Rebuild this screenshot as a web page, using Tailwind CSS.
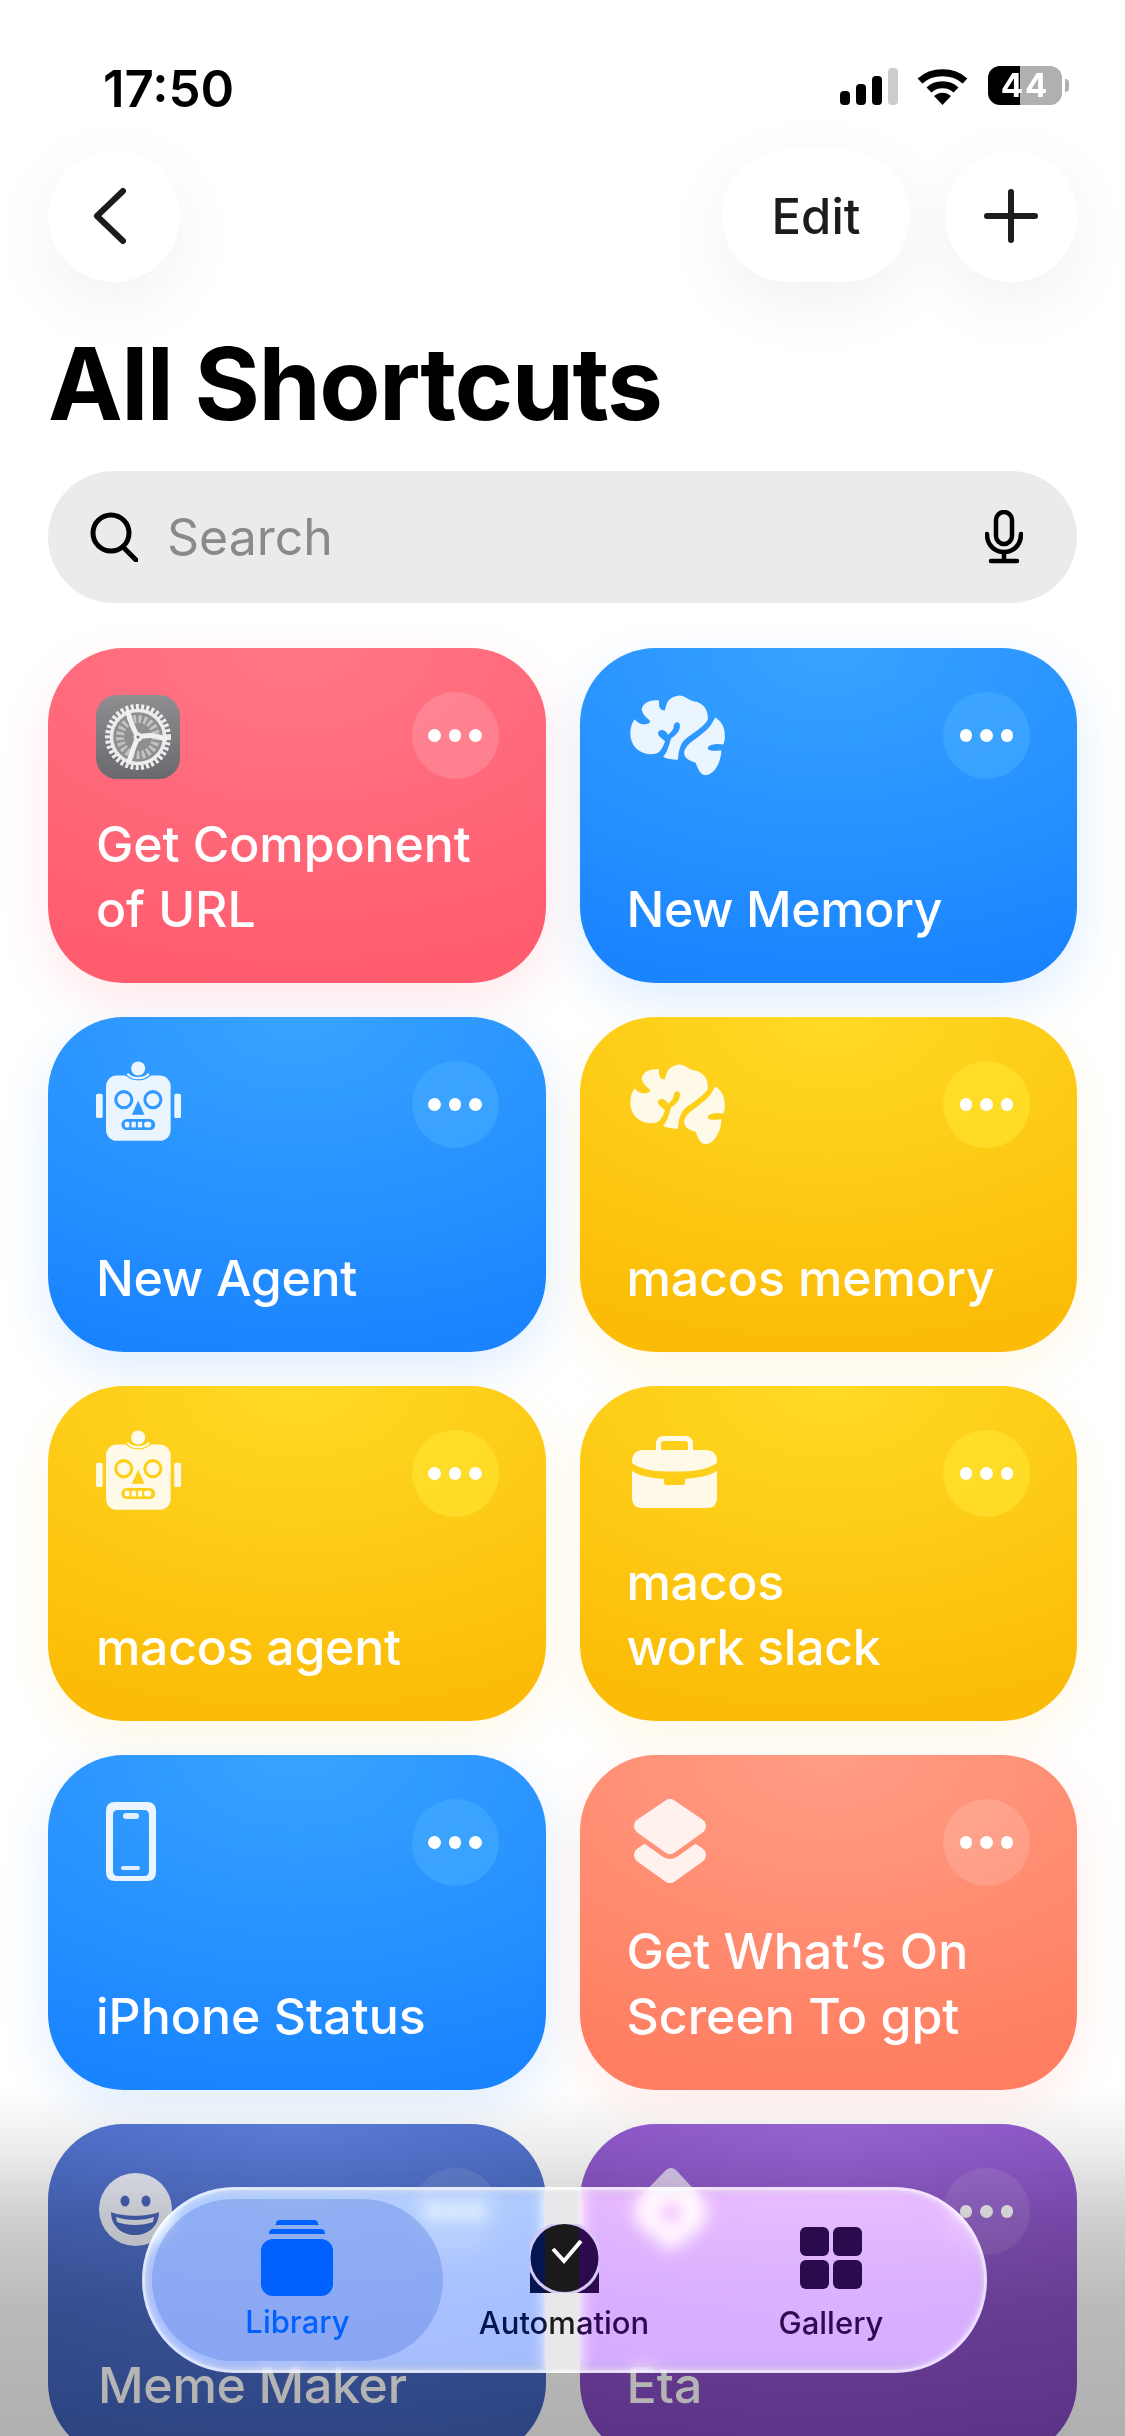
<!DOCTYPE html>
<html lang="en">
<head>
  <meta charset="UTF-8" />
  <meta name="viewport" content="width=device-width, initial-scale=1" />
  <title>All Shortcuts</title>
  <script src="https://cdn.jsdelivr.net/npm/@tailwindcss/browser@4"></script>
</head>
<body class="bg-white">

  <!-- shared icons -->
  <svg class="hidden">
    <symbol id="brain" viewBox="90 45 290 245">
      <path d="M125 88 C130 68 155 58 178 62 C176 75 178 92 195 92 C200 70 205 52 235 47 C255 45 268 62 285 65 C310 68 328 90 325 120 C315 140 280 160 255 180 C240 195 236 220 235 240 C220 242 200 238 190 232 C205 215 207 195 215 175 C228 168 245 150 240 133 C235 122 222 128 222 140 C222 150 212 158 205 165 C198 150 180 145 175 158 C172 170 190 178 196 185 C190 200 185 215 170 222 C140 230 100 215 92 175 C88 150 95 128 105 118 C110 130 135 140 150 128 C155 118 130 115 125 88 Z" />
      <path d="M347 113 C365 122 378 145 376 165 C378 175 376 185 372 195 C358 192 335 192 326 202 C322 212 335 214 345 214 C352 213 360 212 366 213 C366 240 350 285 318 288 C300 285 295 265 288 250 C270 245 250 235 254 215 C262 190 290 180 310 160 C330 145 340 130 347 113 Z" />
    </symbol>
    <symbol id="robot" viewBox="52 45 254 238">
      <rect x="82" y="88" width="193" height="195" rx="32" />
      <rect x="52" y="142" width="20" height="73" rx="5" />
      <rect x="286" y="142" width="20" height="73" rx="5" />
      <path d="M130 72 C145 112 212 112 226 72 L226 60 H130 Z" fill="currentColor" />
      <path d="M146 82 C158 100 198 100 210 82" fill="none" stroke="white" stroke-opacity="0.9" stroke-width="7" />
      <circle cx="178" cy="67" r="21" />
      <circle cx="135" cy="160" r="24" fill="none" stroke="currentColor" stroke-width="9" />
      <circle cx="222" cy="160" r="24" fill="none" stroke="currentColor" stroke-width="9" />
      <path d="M178 163 L197 205 H159 Z" fill="currentColor" />
      <rect x="128" y="218" width="101" height="33" rx="16" fill="currentColor" />
      <rect x="138" y="226" width="14" height="17" rx="4" fill="white" fill-opacity="0.9" />
      <rect x="158" y="226" width="13" height="17" fill="white" fill-opacity="0.9" />
      <rect x="177" y="226" width="13" height="17" fill="white" fill-opacity="0.9" />
      <rect x="196" y="226" width="21" height="17" rx="5" fill="white" fill-opacity="0.9" />
    </symbol>
  </svg>

  <div class="relative w-[1125px] h-[2436px] overflow-hidden bg-white font-[Inter,sans-serif] text-black">

    <!-- status bar -->
    <div class="flex justify-between h-[149px] pt-[62px] pl-[103px] pr-[56px]">
      <span class="text-[51px] leading-[54px] font-semibold">17:50</span>
      <div class="flex items-start pt-[6px]">
        <svg width="58" height="37" viewBox="0 0 58 37">
          <rect x="0" y="23" width="10" height="14" rx="4" />
          <rect x="16" y="16" width="10" height="21" rx="4" />
          <rect x="32" y="8" width="10" height="29" rx="4" />
          <rect x="48" y="0" width="10" height="37" rx="4" fill="#cccccc" />
        </svg>
        <svg class="ml-[19px]" width="51" height="37" viewBox="0 0 51 37" fill="none" stroke="black" stroke-width="7">
          <path d="M3 13 C15 2 36 2 48 13" />
          <path d="M12 22 C19 15 32 15 39 22" />
          <path d="M17 28 L25.5 37 L34 28 C29 23.5 22 23.5 17 28 Z" fill="black" stroke="none" />
        </svg>
        <div class="ml-[20px] flex items-center -mt-[2px]">
          <div class="relative w-[74px] h-[39px] rounded-[12px] overflow-hidden bg-[linear-gradient(90deg,#000_0,#000_32px,#b0b0b0_32px)] flex items-center justify-center">
            <span class="text-white text-[33px] leading-none font-bold tracking-[2px]">44</span>
          </div>
          <div class="ml-[3px] w-[4px] h-[13px] rounded-r-full bg-[#b0b0b0]"></div>
        </div>
      </div>
    </div>

    <!-- nav -->
    <div class="flex justify-between items-center px-[48px] h-[133px]">
      <div class="flex items-center justify-center w-[132px] h-[132px] rounded-full bg-white shadow-[0_20px_70px_rgba(0,0,0,0.06)]">
        <svg class="-ml-[8px]" width="34" height="58" viewBox="0 0 34 58" fill="none" stroke="#1c1c1e" stroke-width="6" stroke-linecap="round" stroke-linejoin="round"><path d="M30 4 L4 29 L30 54" /></svg>
      </div>
      <div class="flex gap-[35px]">
        <div class="flex items-center justify-center w-[188px] h-[132px] pt-[2px] rounded-full bg-white text-[#1c1c1e] text-[49px] font-medium shadow-[0_20px_70px_rgba(0,0,0,0.06)]">Edit</div>
        <div class="flex items-center justify-center w-[132px] h-[132px] rounded-full bg-white shadow-[0_20px_70px_rgba(0,0,0,0.06)]">
          <svg width="54" height="54" viewBox="0 0 54 54" stroke="#1c1c1e" stroke-width="6" stroke-linecap="round"><path d="M27 3 V51 M3 27 H51" /></svg>
        </div>
      </div>
    </div>

    <!-- title -->
    <h1 class="px-[48px] h-[189px] flex items-center pt-[14px] text-[100px] font-bold tracking-[-1.5px] leading-none">All Shortcuts</h1>

    <!-- search -->
    <div class="mx-[48px] h-[132px] rounded-[66px] bg-[#ebebeb] flex items-center pl-[42px] pr-[54px]">
      <svg width="48" height="50" viewBox="0 0 48 50" fill="none" stroke="black" stroke-width="5" stroke-linecap="round"><circle cx="21" cy="21" r="18" /><path d="M33 35 L46 48" /></svg>
      <span class="ml-[29px] text-[50px] text-[#8a8a8a]">Search</span>
      <svg class="ml-auto" width="38" height="54" viewBox="0 0 38 54" fill="none" stroke="black" stroke-width="4.5" stroke-linecap="round"><rect x="11" y="2" width="16" height="32" rx="8" /><path d="M2 24 C2 48 36 48 36 24" /><path d="M19 42 V51 M6 51 H32" /></svg>
    </div>

    <!-- cards -->
    <div class="grid grid-cols-2 gap-x-[34px] gap-y-[34px] auto-rows-[335px] px-[48px] mt-[45px]">

      <div class="flex flex-col justify-between rounded-[76px] pt-[44px] pb-[41px] pl-[48px] pr-[47px] text-white bg-[radial-gradient(110%_100%_at_50%_0%,#ff7687_0%,#ff5c6e_100%)] shadow-[0_18px_50px_rgba(255,92,110,0.14)]">
        <div class="flex justify-between items-start">
          <svg class="mt-[3px]" width="84" height="84" viewBox="0 0 84 84" fill="none">
            <defs><linearGradient id="gearbg" x1="0" y1="0" x2="0" y2="1"><stop offset="0" stop-color="#8e8e91" /><stop offset="1" stop-color="#69696e" /></linearGradient></defs>
            <rect width="84" height="84" rx="21" fill="url(#gearbg)" />
            <circle cx="42" cy="42" r="26" fill="#8f8f91" />
            <circle cx="42" cy="42" r="30" stroke="#ececec" stroke-width="6" stroke-dasharray="3 2.15" />
            <circle cx="42" cy="42" r="26.500" stroke="#ececec" stroke-width="3.5" />
            <circle cx="42" cy="42" r="18" stroke="#c2c2c4" stroke-width="8" stroke-dasharray="3 2.300" />
            <path d="M42 42 Q35 30 32 17 M42 42 Q56 38 69 44 M42 42 Q36 56 33 67" stroke="#f0f0f0" stroke-width="5" stroke-linecap="round" />
            <circle cx="42" cy="42" r="4.500" fill="#f0f0f0" />
            <circle cx="42" cy="42" r="1.500" fill="#77777a" />
          </svg>
          <div class="flex items-center justify-center gap-[8px] w-[87px] h-[87px] rounded-full bg-white/15"><i class="w-[12.5px] h-[12.5px] rounded-full bg-white"></i><i class="w-[12.5px] h-[12.5px] rounded-full bg-white"></i><i class="w-[12.5px] h-[12.5px] rounded-full bg-white"></i></div>
        </div>
        <div class="text-[50px] leading-[65px] font-medium tracking-[-0.1px]">Get Component<br />of URL</div>
      </div>

      <div class="flex flex-col justify-between rounded-[76px] pt-[44px] pb-[41px] pl-[47px] pr-[47px] text-white bg-[radial-gradient(110%_100%_at_50%_0%,#38a3ff_0%,#1a84ff_100%)] shadow-[0_18px_50px_rgba(26,132,255,0.14)]">
        <div class="flex justify-between items-start">
          <svg class="mt-[3px] ml-[3px] fill-white/90" width="96" height="81"><use href="#brain" /></svg>
          <div class="flex items-center justify-center gap-[8px] w-[87px] h-[87px] rounded-full bg-[#4ab0ff]/50"><i class="w-[12.5px] h-[12.5px] rounded-full bg-white"></i><i class="w-[12.5px] h-[12.5px] rounded-full bg-white"></i><i class="w-[12.5px] h-[12.5px] rounded-full bg-white"></i></div>
        </div>
        <div class="text-[50px] leading-[65px] font-medium tracking-[-0.4px]">New Memory</div>
      </div>

      <div class="flex flex-col justify-between rounded-[76px] pt-[44px] pb-[41px] pl-[48px] pr-[47px] text-white bg-[radial-gradient(110%_100%_at_50%_0%,#38a3ff_0%,#1a84ff_100%)] shadow-[0_18px_50px_rgba(26,132,255,0.14)]">
        <div class="flex justify-between items-start">
          <svg class="fill-white/90 text-[#2f99ff]" width="85" height="80"><use href="#robot" /></svg>
          <div class="flex items-center justify-center gap-[8px] w-[87px] h-[87px] rounded-full bg-[#4ab0ff]/50"><i class="w-[12.5px] h-[12.5px] rounded-full bg-white"></i><i class="w-[12.5px] h-[12.5px] rounded-full bg-white"></i><i class="w-[12.5px] h-[12.5px] rounded-full bg-white"></i></div>
        </div>
        <div class="text-[50px] leading-[65px] font-medium tracking-[-0.3px]">New Agent</div>
      </div>

      <div class="flex flex-col justify-between rounded-[76px] pt-[44px] pb-[41px] pl-[47px] pr-[47px] text-white bg-[radial-gradient(110%_100%_at_50%_0%,#ffda25_0%,#fbbb06_100%)] shadow-[0_18px_50px_rgba(251,187,6,0.1)]">
        <div class="flex justify-between items-start">
          <svg class="mt-[3px] ml-[3px] fill-white/90" width="96" height="81"><use href="#brain" /></svg>
          <div class="flex items-center justify-center gap-[8px] w-[87px] h-[87px] rounded-full bg-[#ffe530]/60"><i class="w-[12.5px] h-[12.5px] rounded-full bg-white"></i><i class="w-[12.5px] h-[12.5px] rounded-full bg-white"></i><i class="w-[12.5px] h-[12.5px] rounded-full bg-white"></i></div>
        </div>
        <div class="text-[50px] leading-[65px] font-medium tracking-[-0.1px]">macos memory</div>
      </div>

      <div class="flex flex-col justify-between rounded-[76px] pt-[44px] pb-[41px] pl-[48px] pr-[47px] text-white bg-[radial-gradient(110%_100%_at_50%_0%,#ffda25_0%,#fbbb06_100%)] shadow-[0_18px_50px_rgba(251,187,6,0.1)]">
        <div class="flex justify-between items-start">
          <svg class="fill-white/90 text-[#fecf17]" width="85" height="80"><use href="#robot" /></svg>
          <div class="flex items-center justify-center gap-[8px] w-[87px] h-[87px] rounded-full bg-[#ffe530]/60"><i class="w-[12.5px] h-[12.5px] rounded-full bg-white"></i><i class="w-[12.5px] h-[12.5px] rounded-full bg-white"></i><i class="w-[12.5px] h-[12.5px] rounded-full bg-white"></i></div>
        </div>
        <div class="text-[50px] leading-[65px] font-medium tracking-[-0.3px]">macos agent</div>
      </div>

      <div class="flex flex-col justify-between rounded-[76px] pt-[44px] pb-[41px] pl-[47px] pr-[47px] text-white bg-[radial-gradient(110%_100%_at_50%_0%,#ffda25_0%,#fbbb06_100%)] shadow-[0_18px_50px_rgba(251,187,6,0.1)]">
        <div class="flex justify-between items-start">
          <svg class="mt-[6px] ml-[5px] fill-white/90" width="85" height="72" viewBox="0 0 85 72">
            <path d="M26.5 15 V8 Q26.5 2.5 32 2.5 H53 Q58.5 2.5 58.5 8 V15" fill="none" stroke="white" stroke-opacity="0.9" stroke-width="5" />
            <path d="M0 26 Q0 14 12 14 H73 Q85 14 85 26 V27 C72 35 60 35.500 42 35.500 C25 35.500 12 35 0 27 Z" />
            <path d="M0 35 C8 40 18 42 32 43 V47 Q32 49 35 49 H50 Q53 49 53 47 V43 C65 42 77 40 85 35 V62 Q85 72 75 72 H10 Q0 72 0 62 Z" />
          </svg>
          <div class="flex items-center justify-center gap-[8px] w-[87px] h-[87px] rounded-full bg-[#ffe530]/60"><i class="w-[12.5px] h-[12.5px] rounded-full bg-white"></i><i class="w-[12.5px] h-[12.5px] rounded-full bg-white"></i><i class="w-[12.5px] h-[12.5px] rounded-full bg-white"></i></div>
        </div>
        <div class="text-[50px] leading-[65px] font-medium tracking-[-0.3px]">macos<br />work slack</div>
      </div>

      <div class="flex flex-col justify-between rounded-[76px] pt-[44px] pb-[41px] pl-[58px] pr-[47px] text-white bg-[radial-gradient(110%_100%_at_50%_0%,#38a3ff_0%,#1a84ff_100%)] shadow-[0_18px_50px_rgba(26,132,255,0.14)]">
        <div class="flex justify-between items-start">
          <svg class="mt-[3px]" width="50" height="79" viewBox="0 0 50 79">
            <path fill="white" fill-opacity="0.9" fill-rule="evenodd" d="M9 0 H41 Q50 0 50 9 V70 Q50 79 41 79 H9 Q0 79 0 70 V9 Q0 0 9 0 Z M12 8 Q7 8 7 13 V69 Q7 74 12 74 H38 Q43 74 43 69 V13 Q43 8 38 8 Z" />
            <rect x="17" y="11" width="16" height="6" rx="3" fill="white" fill-opacity="0.85" />
            <rect x="15" y="64" width="19" height="4" rx="2" fill="white" fill-opacity="0.85" />
          </svg>
          <div class="flex items-center justify-center gap-[8px] w-[87px] h-[87px] rounded-full bg-[#4ab0ff]/50"><i class="w-[12.5px] h-[12.5px] rounded-full bg-white"></i><i class="w-[12.5px] h-[12.5px] rounded-full bg-white"></i><i class="w-[12.5px] h-[12.5px] rounded-full bg-white"></i></div>
        </div>
        <div class="-ml-[10px] text-[50px] leading-[65px] font-medium">iPhone Status</div>
      </div>

      <div class="flex flex-col justify-between rounded-[76px] pt-[44px] pb-[41px] pl-[47px] pr-[47px] text-white bg-[radial-gradient(110%_100%_at_50%_0%,#ff9d84_0%,#ff7d60_100%)] shadow-[0_18px_50px_rgba(255,125,96,0.14)]">
        <div class="flex justify-between items-start">
          <svg class="ml-[6px]" width="74" height="84" viewBox="0 0 74 84" stroke-linejoin="round">
            <path d="M37 37 L65 56 L37 76 L9 56 Z" fill="#fff1ee" stroke="#fff1ee" stroke-width="16" />
            <path d="M37 8 L65 27 L37 47 L9 27 Z" fill="#ff9378" stroke="#ff9378" stroke-width="26" />
            <path d="M37 8 L65 27 L37 47 L9 27 Z" fill="#fff1ee" stroke="#fff1ee" stroke-width="16" />
          </svg>
          <div class="flex items-center justify-center gap-[8px] w-[87px] h-[87px] rounded-full bg-white/15"><i class="w-[12.5px] h-[12.5px] rounded-full bg-white"></i><i class="w-[12.5px] h-[12.5px] rounded-full bg-white"></i><i class="w-[12.5px] h-[12.5px] rounded-full bg-white"></i></div>
        </div>
        <div class="text-[50px] leading-[65px] font-medium">Get What’s On<br />Screen To gpt</div>
      </div>

      <div class="flex flex-col justify-between rounded-[76px] pt-[44px] pb-[41px] pl-[50px] pr-[47px] text-white bg-[radial-gradient(110%_100%_at_50%_0%,#5e80e0_0%,#4162bb_100%)]">
        <div class="flex justify-between items-start">
          <svg width="73" height="73" viewBox="0 0 73 73" class="mt-[5px] ml-[1px]">
            <circle cx="36.500" cy="36.500" r="36.500" fill="white" fill-opacity="0.9" />
            <ellipse cx="26" cy="28" rx="4.500" ry="5.500" fill="#4a68bf" />
            <ellipse cx="47" cy="28" rx="4.500" ry="5.500" fill="#4a68bf" />
            <path d="M12 39 C24 44 48 44 60 39 C60 54 48 62 36 62 C24 62 12 54 12 39 Z" fill="#4a68bf" />
            <path d="M17 44 C28 48 44 48 55 44 L54 49 C44 53 28 53 18 49 Z" fill="white" fill-opacity="0.9" />
          </svg>
          <div class="flex items-center justify-center gap-[8px] w-[87px] h-[87px] rounded-full bg-white/10"><i class="w-[12.5px] h-[12.5px] rounded-full bg-white"></i><i class="w-[12.5px] h-[12.5px] rounded-full bg-white"></i><i class="w-[12.5px] h-[12.5px] rounded-full bg-white"></i></div>
        </div>
        <div class="text-[50px] leading-[65px] font-medium tracking-[-0.3px]">Meme Maker</div>
      </div>

      <div class="flex flex-col justify-between rounded-[76px] pt-[44px] pb-[41px] pl-[47px] pr-[47px] text-white bg-[radial-gradient(110%_100%_at_50%_0%,#9c68da_0%,#8549c2_100%)]">
        <div class="flex justify-between items-start">
          <svg class="-mt-[1px] ml-[8px]" width="71" height="84" viewBox="0 0 71 84">
            <path fill="white" fill-opacity="0.7" fill-rule="evenodd" d="M31 3 Q36 -1 41 3 L66 30 Q71 35 71 42 V50 Q71 56 67 60 L42 81 Q36 85 30 81 L5 60 Q0 56 0 50 V42 Q0 35 5 30 Z M36 35 A10 10 0 1 0 36 55 A10 10 0 1 0 36 35 Z" />
          </svg>
          <div class="flex items-center justify-center gap-[8px] w-[87px] h-[87px] rounded-full bg-white/10"><i class="w-[12.5px] h-[12.5px] rounded-full bg-white"></i><i class="w-[12.5px] h-[12.5px] rounded-full bg-white"></i><i class="w-[12.5px] h-[12.5px] rounded-full bg-white"></i></div>
        </div>
        <div class="text-[50px] leading-[65px] font-medium">Eta</div>
      </div>
    </div>

    <!-- bottom fade under the tab bar -->
    <div class="absolute inset-x-0 bottom-0 h-[346px] mix-blend-multiply bg-[linear-gradient(180deg,#ffffff_0,#ececec_60px,#cfcfcf_130px,#bbbbbb_210px,#b0b0b0_346px)]"></div>

    <!-- tab bar -->
    <div class="absolute left-[142px] top-[2187px] w-[845px] h-[186px] rounded-[93px] border-[3px] border-white/60 bg-white/55 backdrop-blur-[8px] backdrop-brightness-[1.45] backdrop-saturate-[1.5] shadow-[inset_0_0_6px_rgba(255,255,255,0.6)] grid grid-cols-[291px_242px_1fr] px-[7px] py-[9px]">
      <div class="absolute -z-10 left-[400px] top-0 bottom-0 w-[34px] bg-[#e8e8ea] blur-[1px]"></div>
      <div class="flex flex-col items-center rounded-[81px] bg-[#5f82e0]/40 text-[#0061fe]">
        <svg class="mt-[20px] -ml-[2px]" width="72" height="77" viewBox="0 0 72 77" fill="#0061fe">
          <path d="M15 5 Q15 1 19 1 H53 Q57 1 57 5 L58 6 H14 Z" />
          <path d="M8 15 Q8 10 12 10 H60 Q64 10 64 15 H8 Z" />
          <rect x="0" y="20" width="72" height="57" rx="12" />
        </svg>
        <span class="mt-[6px] text-[31px] leading-[40px] font-medium">Library</span>
      </div>
      <div class="flex flex-col items-center">
        <svg class="mt-[25px]" width="69" height="69" viewBox="0 0 69 69">
          <defs><linearGradient id="auto" x1="0" y1="0" x2="1" y2="0"><stop offset="0.22" stop-color="#04154f" /><stop offset="0.22" stop-color="#1a1a1c" /><stop offset="0.71" stop-color="#1a1a1c" /><stop offset="0.71" stop-color="#2b0a4e" /></linearGradient></defs>
          <path d="M0 47 V69 H69 V47 Z" fill="url(#auto)" />
          <circle cx="34.500" cy="34" r="37" fill="#d5c8f5" />
          <circle cx="34.500" cy="34" r="34" fill="url(#auto)" />
          <path d="M23 25 L34 37 L51 17" fill="none" stroke="white" stroke-width="4" />
        </svg>
        <span class="mt-[10px] text-[31px] leading-[40px] font-medium bg-clip-text text-transparent bg-[linear-gradient(90deg,#04154f_39%,#1a1a1c_39%,#1a1a1c_59%,#2b0a4e_59%)]">Automation</span>
      </div>
      <div class="flex flex-col items-center">
        <div class="mt-[28px] grid grid-cols-[29px_29px] auto-rows-[29px] gap-[4px]">
          <div class="rounded-[6px] bg-[#2b0a4e]"></div>
          <div class="rounded-[6px] bg-[#2b0a4e]"></div>
          <div class="rounded-[6px] bg-[#2b0a4e]"></div>
          <div class="rounded-[6px] bg-[#2b0a4e]"></div>
        </div>
        <span class="mt-[14px] text-[31px] leading-[40px] font-medium text-[#2b0a4e]">Gallery</span>
      </div>
    </div>
  </div>

</body>
</html>
